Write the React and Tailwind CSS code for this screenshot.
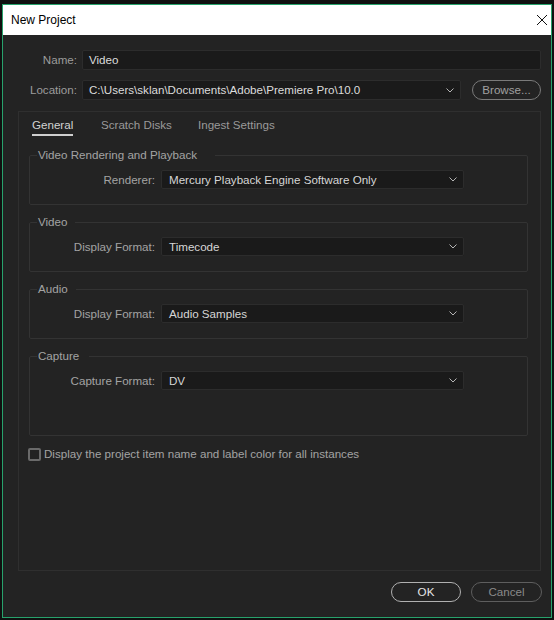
import React from 'react';

const font = { fontFamily: '"Liberation Sans", Arial, sans-serif' };

const Chevron = () => (
    <svg width="8" height="5" viewBox="0 0 8 5" className="shrink-0">
        <path d="M0.5 0.5 L4 4 L7.5 0.5" fill="none" stroke="#b5b5b5" strokeWidth="1" />
    </svg>
);

const Select = ({ value }) => (
    <div className="w-[303px] h-[19px] flex items-center justify-between pl-[7px] pr-[6px] bg-[#1a1a1a] border border-[#2c2c2c] rounded-[2px] text-[#d6d6d6]">
        <span>{value}</span>
        <Chevron />
    </div>
);

const Group = ({ title, label, value, bottom = 'pb-[15px]', legendPad = 'pr-[8px]' }) => (
    <fieldset className={`ml-[10px] mr-[12px] mb-[9px] border border-[#333333] rounded-[2px] pt-[7px] ${bottom}`}>
        <legend className={`ml-[7px] pl-[1px] ${legendPad} text-[#a3a3a3] leading-[16px]`}>{title}</legend>
        <div className="flex items-center gap-[6px]">
            <span className="w-[125px] text-right text-[#a3a3a3]">{label}</span>
            <Select value={value} />
        </div>
    </fieldset>
);

export default function App() {
    return (
        <div style={font} className="w-[554px] h-[620px] bg-[#101010] pt-[4px] pl-[2px] pr-[2px] pb-[2px] text-[11.6px] leading-[16px]">
            <div className="h-full flex flex-col border border-[#27a26c]">
                {/* title bar */}
                <div className="h-[30px] shrink-0 bg-white flex items-center justify-between pl-[8px] pr-[4px]">
                    <span className="text-black text-[12px]">New Project</span>
                    <svg width="10" height="10" viewBox="0 0 10 10">
                        <path d="M0 0 L10 10 M10 0 L0 10" stroke="#111" strokeWidth="1" />
                    </svg>
                </div>

                <div className="flex-1 flex flex-col bg-[#232323] pt-[15px]">
                    <div className="flex items-center gap-[5px] pr-[10px]">
                        <span className="w-[74px] text-right text-[#9c9c9c]">Name:</span>
                        <div className="flex-1 h-[20px] flex items-center pl-[6px] bg-[#1a1a1a] border border-[#2c2c2c] rounded-[2px] text-[#dcdcdc]">Video</div>
                    </div>
                    <div className="flex items-center gap-[5px] pr-[10px] mt-[10px]">
                        <span className="w-[74px] text-right text-[#9c9c9c]">Location:</span>
                        <div className="flex-1 h-[20px] flex items-center justify-between pl-[6px] pr-[6px] bg-[#1a1a1a] border border-[#2c2c2c] rounded-[2px] text-[#dcdcdc]">
                            <span>C:\Users\sklan\Documents\Adobe\Premiere Pro\10.0</span>
                            <Chevron />
                        </div>
                        <button type="button" className="ml-[6px] w-[69px] h-[20px] rounded-full border border-[#7a7a7a] text-[#a0a0a0] flex items-center justify-center">Browse...</button>
                    </div>

                    {/* tab panel */}
                    <div className="flex-1 ml-[15px] mr-[10px] mt-[11px] border border-[#2f2f2f] flex flex-col">
                        <div className="flex pl-[13px] pt-[5px]">
                            <div className="w-[69px]">
                                <span className="inline-block pb-[1px] border-b-2 border-[#cfcfcf] text-[#d2d2d2]">General</span>
                            </div>
                            <div className="w-[97px] text-[#9a9a9a] pb-[3px]">Scratch Disks</div>
                            <div className="text-[#9a9a9a] pb-[3px]">Ingest Settings</div>
                        </div>

                        <div className="mt-[11px] flex flex-col">
                            <Group title="Video Rendering and Playback" label="Renderer:" value="Mercury Playback Engine Software Only" legendPad="pr-[18px]" />
                            <Group title="Video" label="Display Format:" value="Timecode" />
                            <Group title="Audio" label="Display Format:" value="Audio Samples" />
                            <Group title="Capture" label="Capture Format:" value="DV" bottom="pb-[45px]" legendPad="pr-[10px]" />
                        </div>

                        <div className="flex items-center ml-[9px] mt-[1px] gap-[3px]">
                            <span className="w-[13px] h-[13px] rounded-[2px] border-2 border-[#6a6a6a]" />
                            <span className="text-[#a3a3a3]">Display the project item name and label color for all instances</span>
                        </div>
                    </div>

                    <div className="flex justify-end gap-[10px] pr-[9px] mt-[11px] mb-[15px]">
                        <button type="button" className="w-[70px] h-[20px] rounded-full border border-[#b0b0b0] text-[#e6e6e6] flex items-center justify-center">OK</button>
                        <button type="button" className="w-[71px] h-[20px] rounded-full border border-[#5e5e5e] text-[#8a8a8a] flex items-center justify-center">Cancel</button>
                    </div>
                </div>
            </div>
        </div>
    );
}
